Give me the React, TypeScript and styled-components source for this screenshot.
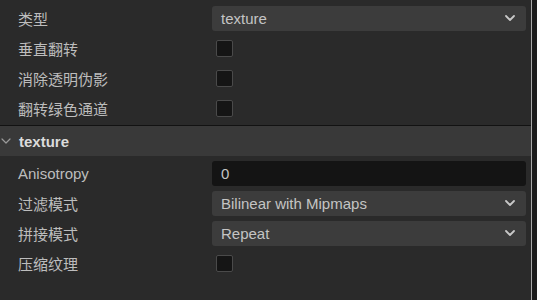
import React, { FC } from 'react';
import styled, { createGlobalStyle } from 'styled-components';

const GlobalStyle = createGlobalStyle`
  html, body {
    margin: 0;
    padding: 0;
    background: #2a2a2a;
  }
  body {
    font-family: "Liberation Sans", "Noto Sans CJK SC", Arial, sans-serif;
    font-size: 15px;
    color: #bdbdbd;
  }
`;

const Chevron: FC<{ size?: number; stroke?: number }> = ({ size = 10, stroke = 1.8 }) => (
  <svg width={size} height={size * 0.6} viewBox="0 0 10 6" fill="none">
    <path d="M1 1 L5 5 L9 1" stroke="currentColor" strokeWidth={stroke} strokeLinecap="round" strokeLinejoin="round" />
  </svg>
);

const Row: FC<{ label: string; children?: React.ReactNode }> = ({ label, children }) => (
  <PropRow>
    <Label>{label}</Label>
    <Control>{children}</Control>
  </PropRow>
);

const SelectField: FC<{ value: string }> = ({ value }) => (
  <Select>
    <span>{value}</span>
    <Arrow>
      <Chevron />
    </Arrow>
  </Select>
);

export default function App() {
  return (
    <Panel>
      <GlobalStyle />
      <Content>
        <Group $top={3} $bottom={2}>
          <Row label="类型">
            <SelectField value="texture" />
          </Row>
          <Row label="垂直翻转">
            <Checkbox />
          </Row>
          <Row label="消除透明伪影">
            <Checkbox />
          </Row>
          <Row label="翻转绿色通道">
            <Checkbox />
          </Row>
        </Group>
        <SectionHeader>
          <Fold>
            <Chevron size={10} stroke={1.2} />
          </Fold>
          <SectionTitle>texture</SectionTitle>
        </SectionHeader>
        <Group $top={2} $bottom={0}>
          <Row label="Anisotropy">
            <NumberInput>0</NumberInput>
          </Row>
          <Row label="过滤模式">
            <SelectField value="Bilinear with Mipmaps" />
          </Row>
          <Row label="拼接模式">
            <SelectField value="Repeat" />
          </Row>
          <Row label="压缩纹理">
            <Checkbox />
          </Row>
        </Group>
      </Content>
      <ScrollEdge />
    </Panel>
  );
}

const Panel = styled.div`
  display: flex;
  height: 300px;
  background: #2a2a2a;
`;

const Content = styled.div`
  flex: 1;
  display: flex;
  flex-direction: column;
`;

const ScrollEdge = styled.div`
  width: 5px;
  background: #1b1b1b;
  border-left: 1px solid #a8a8a8;
`;

const Group = styled.div<{ $top: number; $bottom: number }>`
  display: flex;
  flex-direction: column;
  padding: ${(p) => p.$top}px 0 ${(p) => p.$bottom}px;
`;

const PropRow = styled.div`
  display: flex;
  align-items: center;
  height: 30px;
  padding: 0 5px 0 18px;
`;

const Label = styled.div`
  width: 194px;
  color: #bdbdbd;
  white-space: nowrap;
`;

const Control = styled.div`
  flex: 1;
  display: flex;
  align-items: center;
`;

const Select = styled.div`
  flex: 1;
  height: 25px;
  display: flex;
  align-items: center;
  justify-content: space-between;
  padding: 0 11px 0 9px;
  background: #3c3c3c;
  border-radius: 3px;
  color: #c4c4c4;
`;

const Arrow = styled.span`
  display: flex;
  color: #c8c8c8;
`;

const NumberInput = styled.div`
  flex: 1;
  height: 25px;
  display: flex;
  align-items: center;
  padding: 0 9px;
  background: #141414;
  border-radius: 3px;
  color: #c4c4c4;
`;

const Checkbox = styled.span`
  width: 15px;
  height: 15px;
  margin-left: 4px;
  background: #151515;
  border: 1px solid #4a4a4a;
  border-radius: 2px;
`;

const SectionHeader = styled.div`
  display: flex;
  align-items: center;
  height: 30px;
  border-top: 1px solid #121212;
  background: #393939;
`;

const Fold = styled.span`
  display: flex;
  width: 18px;
  padding-left: 1px;
  color: #9a9a9a;
`;

const SectionTitle = styled.span`
  font-weight: bold;
  color: #dcdcdc;
`;
